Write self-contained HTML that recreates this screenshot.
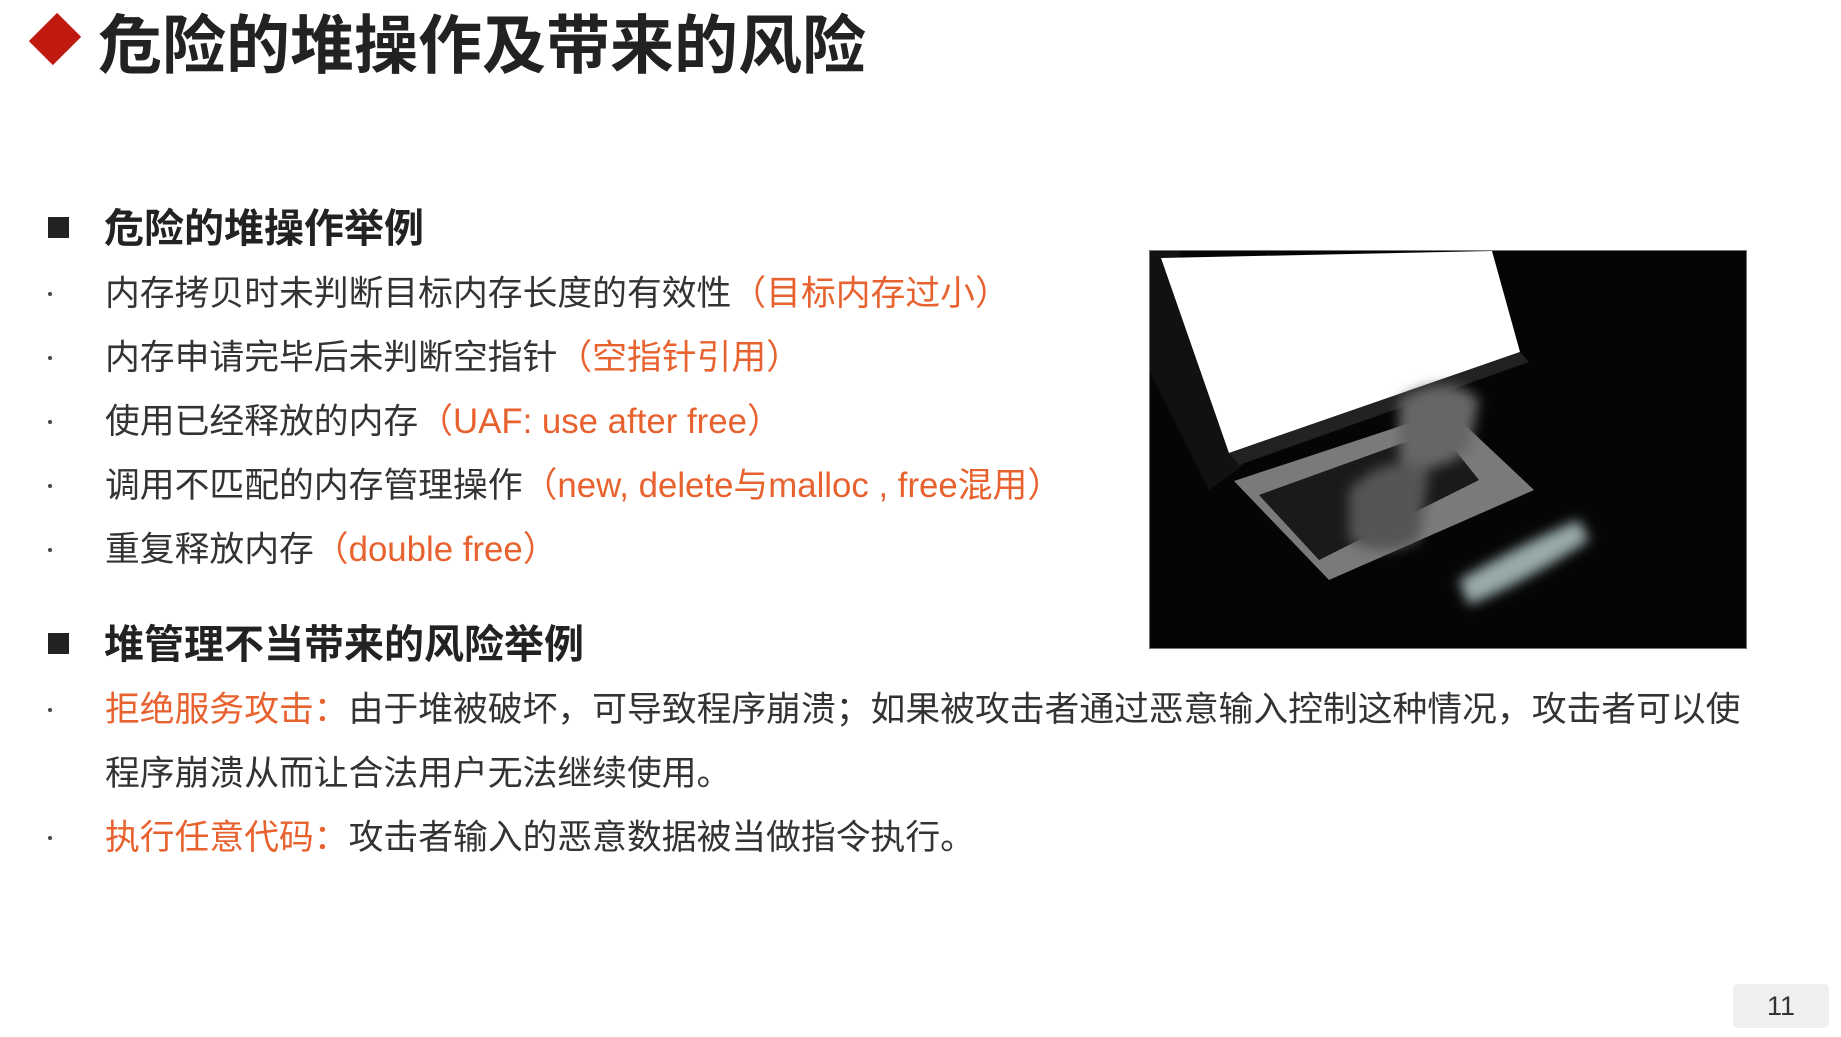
<!DOCTYPE html>
<html><head><meta charset="utf-8"><style>
body{margin:0;width:1841px;height:1037px;background:#fff;position:relative;overflow:hidden;font-family:"Liberation Sans","Noto Sans CJK SC",sans-serif;color:#333}
.a{position:absolute;white-space:nowrap;line-height:50px}
.t{font-size:64px;font-weight:bold;color:#222;line-height:74px}
.h{font-size:40px;font-weight:bold;color:#222}
.b{font-size:34.8px;color:#333}
.o{color:#e8622f}
.dot{position:absolute;width:4px;height:4px;background:#444;border-radius:50%}
.sq{position:absolute;width:21px;height:21px;background:#222}
</style></head><body>
<div style="position:absolute;left:35px;top:19px;width:40px;height:40px;background:#c0190f;transform:rotate(45deg) scale(0.85,1.0)"></div>
<div class="a t" style="left:98px;top:9px">危险的堆操作及带来的风险</div>

<div class="sq" style="left:48px;top:217px"></div>
<div class="a h" style="left:104px;top:204px">危险的堆操作举例</div>
<div class="dot" style="left:48px;top:292px"></div>
<div class="a b" style="left:105px;top:269px">内存拷贝时未判断目标内存长度的有效性<span class="o">（目标内存过小）</span></div>
<div class="dot" style="left:48px;top:356px"></div>
<div class="a b" style="left:105px;top:333px">内存申请完毕后未判断空指针<span class="o">（空指针引用）</span></div>
<div class="dot" style="left:48px;top:420px"></div>
<div class="a b" style="left:105px;top:397px">使用已经释放的内存<span class="o">（UAF: use after free）</span></div>
<div class="dot" style="left:48px;top:484px"></div>
<div class="a b" style="left:105px;top:461px">调用不匹配的内存管理操作<span class="o">（new, delete与malloc , free混用）</span></div>
<div class="dot" style="left:48px;top:548px"></div>
<div class="a b" style="left:105px;top:525px">重复释放内存<span class="o">（double free）</span></div>

<div class="sq" style="left:48px;top:633px"></div>
<div class="a h" style="left:104px;top:620px">堆管理不当带来的风险举例</div>
<div class="dot" style="left:48px;top:708px"></div>
<div class="a b" style="left:105px;top:685px"><span class="o">拒绝服务攻击：</span>由于堆被破坏，可导致程序崩溃；如果被攻击者通过恶意输入控制这种情况，攻击者可以使</div>
<div class="a b" style="left:105px;top:749px">程序崩溃从而让合法用户无法继续使用。</div>
<div class="dot" style="left:48px;top:836px"></div>
<div class="a b" style="left:105px;top:813px"><span class="o">执行任意代码：</span>攻击者输入的恶意数据被当做指令执行。</div>

<svg style="position:absolute;left:1149px;top:250px" width="598" height="399" viewBox="0 0 598 399">
<defs><filter id="bl"><feGaussianBlur stdDeviation="6"/></filter></defs>
<rect width="598" height="399" fill="#050505"/>
<polygon points="0,0 30,0 95,215 60,240 0,120" fill="#111"/>
<polygon points="12,8 343,1 371,102 80,203" fill="#fff"/>
<polygon points="80,203 371,102 380,112 90,215" fill="#222"/>
<polygon points="85,231 300,160 385,240 180,330" fill="#7a7a7a"/>
<polygon points="110,245 290,180 330,230 170,310" fill="#1a1a1a"/>
<g filter="url(#bl)">
<path d="M250,150 Q300,120 330,150 L320,200 Q280,230 250,210 Z" fill="#666"/>
<path d="M200,240 Q240,200 280,220 L270,290 Q230,310 200,290 Z" fill="#555"/>
<path d="M310,330 Q380,290 430,270 L440,290 Q380,330 320,355 Z" fill="#9aa"/>
</g>
<rect x="0.5" y="0.5" width="597" height="398" fill="none" stroke="#777"/>
</svg>

<div style="position:absolute;left:1733px;top:984px;width:96px;height:44px;background:#f0eeee;border-radius:5px;font-size:27px;line-height:44px;text-align:center;color:#333">11</div>
</body></html>
